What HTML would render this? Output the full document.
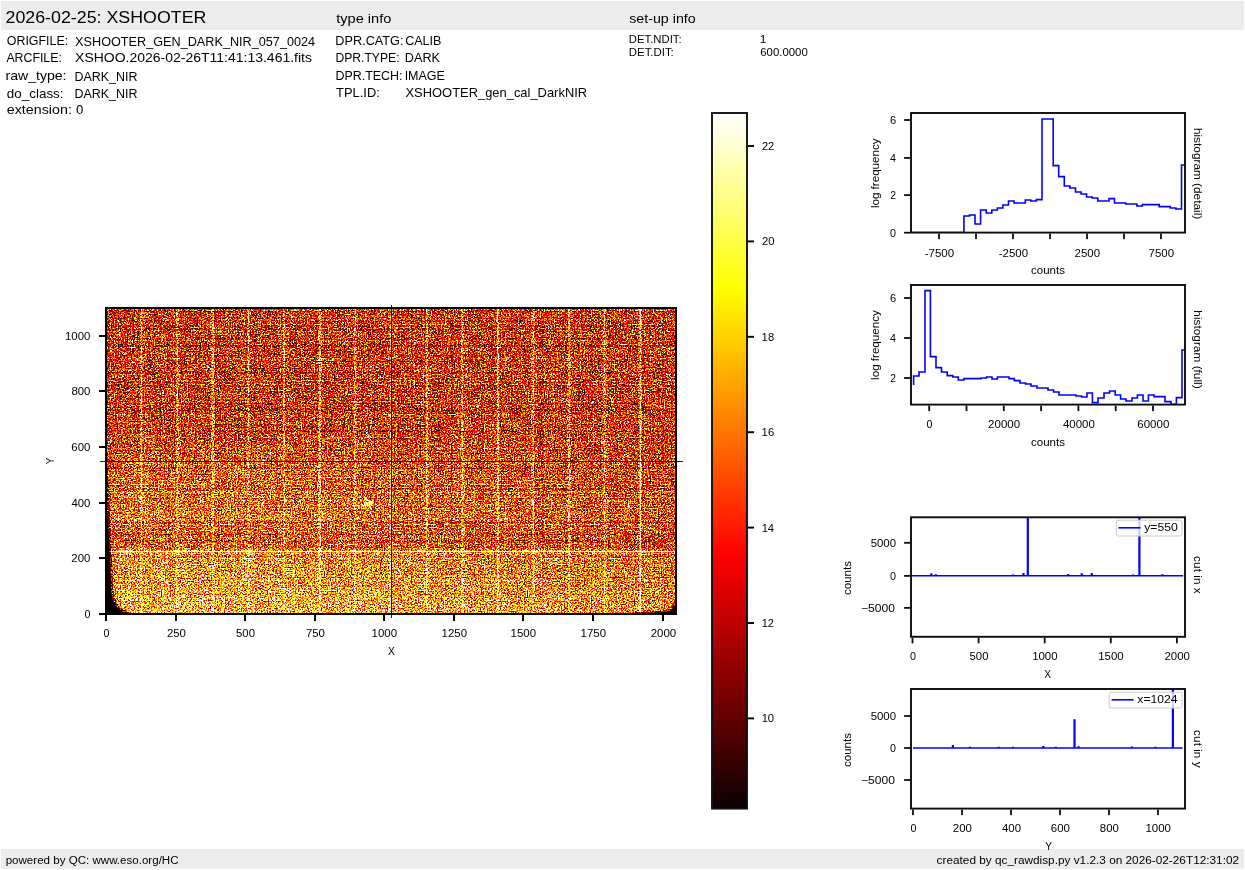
<!DOCTYPE html>
<html><head><meta charset="utf-8"><title>XSHOOTER DARK_NIR raw display</title>
<style>
html,body{margin:0;padding:0;background:#fff;}
body{width:1245px;height:870px;overflow:hidden;}
svg{display:block;will-change:transform;}
text{font-family:"Liberation Sans", sans-serif;}
</style></head>
<body>
<svg width="1245" height="870" viewBox="0 0 1245 870">
<defs>
<linearGradient id="hot" x1="0" y1="1" x2="0" y2="0">
<stop offset="0" stop-color="rgb(11,0,0)"/><stop offset="0.365079" stop-color="rgb(255,0,0)"/>
<stop offset="0.746032" stop-color="rgb(255,255,0)"/><stop offset="1" stop-color="rgb(255,255,255)"/>
</linearGradient>
<linearGradient id="xdark" gradientUnits="userSpaceOnUse" x1="106.0" y1="0" x2="676.0" y2="0">
<stop offset="0" stop-color="#000" stop-opacity="0"/><stop offset="0.3" stop-color="#000" stop-opacity="0"/><stop offset="1" stop-color="#000" stop-opacity="0.15"/>
</linearGradient>
<linearGradient id="bg" gradientUnits="userSpaceOnUse" x1="0" y1="308.0" x2="0" y2="614.0">
<stop offset="0" stop-color="#5d5d5d"/><stop offset="0.4" stop-color="#606060"/><stop offset="0.53" stop-color="#787878"/><stop offset="0.69" stop-color="#858585"/><stop offset="0.74" stop-color="#787878"/><stop offset="0.79" stop-color="#787878"/><stop offset="0.8" stop-color="#919191"/><stop offset="0.89" stop-color="#9d9d9d"/><stop offset="1" stop-color="#afafaf"/>
</linearGradient>
<filter id="nz" filterUnits="userSpaceOnUse" x="106.0" y="308.0" width="570.0" height="306.0" color-interpolation-filters="sRGB">
<feTurbulence type="fractalNoise" baseFrequency="0.7" numOctaves="2" seed="11" result="t"/>
<feColorMatrix in="t" type="matrix" values="1 0 0 0 0  1 0 0 0 0  1 0 0 0 0  0 0 0 0 1" result="n"/>
<feTurbulence type="fractalNoise" baseFrequency="0.09" numOctaves="2" seed="5" result="t2"/>
<feColorMatrix in="t2" type="matrix" values="1 0 0 0 0  1 0 0 0 0  1 0 0 0 0  0 0 0 0 1" result="n2"/>
<feTurbulence type="fractalNoise" baseFrequency="0 0.62" numOctaves="1" seed="23" result="t3"/>
<feColorMatrix in="t3" type="matrix" values="1 0 0 0 0  1 0 0 0 0  1 0 0 0 0  0 0 0 0 1" result="n3"/>
<feComposite in="SourceGraphic" in2="n2" operator="arithmetic" k1="0" k2="1" k3="0.22" k4="-0.11" result="s2"/>
<feComposite in="s2" in2="n3" operator="arithmetic" k1="0" k2="1" k3="0.5" k4="-0.25" result="s3a"/>
<feTurbulence type="fractalNoise" baseFrequency="0.45 0" numOctaves="2" seed="67" result="t5"/>
<feColorMatrix in="t5" type="matrix" values="1 0 0 0 0  1 0 0 0 0  1 0 0 0 0  0 0 0 0 1" result="n5"/>
<feComposite in="s3a" in2="n5" operator="arithmetic" k1="0" k2="1" k3="0.3" k4="-0.15" result="s3"/>
<feTurbulence type="fractalNoise" baseFrequency="0.77" numOctaves="1" seed="41" result="t4"/>
<feColorMatrix in="t4" type="matrix" values="0 22 0 0 -14.3  0 22 0 0 -14.3  0 22 0 0 -14.3  0 0 0 0 1" result="n4"/>
<feComposite in="s3" in2="n4" operator="arithmetic" k1="0" k2="1" k3="0.6" k4="0" result="s4"/>
<feComposite in="s4" in2="n" operator="arithmetic" k1="1.0" k2="0.5" k3="1.45" k4="-0.725" result="s"/>
<feComponentTransfer in="s">
<feFuncR type="table" tableValues="0.0416 0.0833 0.1249 0.1666 0.2083 0.2499 0.2916 0.3333 0.3750 0.4166 0.4583 0.5000 0.5416 0.5833 0.6250 0.6666 0.7083 0.7500 0.7917 0.8333 0.8750 0.9167 0.9583 1.0000 1.0000 1.0000 1.0000 1.0000 1.0000 1.0000 1.0000 1.0000 1.0000 1.0000 1.0000 1.0000 1.0000 1.0000 1.0000 1.0000 1.0000 1.0000 1.0000 1.0000 1.0000 1.0000 1.0000 1.0000 1.0000 1.0000 1.0000 1.0000 1.0000 1.0000 1.0000 1.0000 1.0000 1.0000 1.0000 1.0000 1.0000 1.0000 1.0000 1.0000"/>
<feFuncG type="table" tableValues="0.0000 0.0000 0.0000 0.0000 0.0000 0.0000 0.0000 0.0000 0.0000 0.0000 0.0000 0.0000 0.0000 0.0000 0.0000 0.0000 0.0000 0.0000 0.0000 0.0000 0.0000 0.0000 0.0000 0.0000 0.0417 0.0833 0.1250 0.1667 0.2083 0.2500 0.2917 0.3333 0.3750 0.4167 0.4583 0.5000 0.5417 0.5833 0.6250 0.6667 0.7083 0.7500 0.7917 0.8333 0.8750 0.9167 0.9583 1.0000 1.0000 1.0000 1.0000 1.0000 1.0000 1.0000 1.0000 1.0000 1.0000 1.0000 1.0000 1.0000 1.0000 1.0000 1.0000 1.0000"/>
<feFuncB type="table" tableValues="0.0000 0.0000 0.0000 0.0000 0.0000 0.0000 0.0000 0.0000 0.0000 0.0000 0.0000 0.0000 0.0000 0.0000 0.0000 0.0000 0.0000 0.0000 0.0000 0.0000 0.0000 0.0000 0.0000 0.0000 0.0000 0.0000 0.0000 0.0000 0.0000 0.0000 0.0000 0.0000 0.0000 0.0000 0.0000 0.0000 0.0000 0.0000 0.0000 0.0000 0.0000 0.0000 0.0000 0.0000 0.0000 0.0000 0.0000 0.0000 0.0625 0.1250 0.1875 0.2500 0.3125 0.3750 0.4375 0.5000 0.5625 0.6250 0.6875 0.7500 0.8125 0.8750 0.9375 1.0000"/>
<feFuncA type="linear" slope="0" intercept="1"/>
</feComponentTransfer>
</filter>
</defs>
<rect x="0" y="0" width="1245" height="870" fill="#fff"/>
<rect x="1" y="1" width="1243" height="29" fill="#ececec"/>
<rect x="1" y="849" width="1243" height="19.6" fill="#ececec"/>
<text x="5.50" y="23.00" font-size="16.97" textLength="200.89" lengthAdjust="spacingAndGlyphs" fill="#000">2026-02-25: XSHOOTER</text>
<text x="336.18" y="22.60" font-size="12.72" textLength="55.15" lengthAdjust="spacingAndGlyphs" fill="#000">type info</text>
<text x="629.20" y="22.60" font-size="12.72" textLength="66.52" lengthAdjust="spacingAndGlyphs" fill="#000">set-up info</text>
<text x="6.81" y="45.00" font-size="12.72" textLength="61.41" lengthAdjust="spacingAndGlyphs" fill="#000">ORIGFILE:</text>
<text x="75.12" y="46.00" font-size="12.72" textLength="240.01" lengthAdjust="spacingAndGlyphs" fill="#000">XSHOOTER_GEN_DARK_NIR_057_0024</text>
<text x="6.38" y="62.00" font-size="12.72" textLength="55.51" lengthAdjust="spacingAndGlyphs" fill="#000">ARCFILE:</text>
<text x="75.09" y="62.00" font-size="12.72" textLength="236.89" lengthAdjust="spacingAndGlyphs" fill="#000">XSHOO.2026-02-26T11:41:13.461.fits</text>
<text x="5.47" y="80.00" font-size="12.72" textLength="61.03" lengthAdjust="spacingAndGlyphs" fill="#000">raw_type:</text>
<text x="74.38" y="80.60" font-size="12.72" textLength="63.05" lengthAdjust="spacingAndGlyphs" fill="#000">DARK_NIR</text>
<text x="6.84" y="98.00" font-size="12.72" textLength="56.72" lengthAdjust="spacingAndGlyphs" fill="#000">do_class:</text>
<text x="74.38" y="98.00" font-size="12.72" textLength="63.05" lengthAdjust="spacingAndGlyphs" fill="#000">DARK_NIR</text>
<text x="6.79" y="114.00" font-size="12.72" textLength="65.13" lengthAdjust="spacingAndGlyphs" fill="#000">extension:</text>
<text x="76.09" y="114.00" font-size="12.72" textLength="7.33" lengthAdjust="spacingAndGlyphs" fill="#000">0</text>
<text x="335.37" y="45.00" font-size="12.72" textLength="68.12" lengthAdjust="spacingAndGlyphs" fill="#000">DPR.CATG:</text>
<text x="405.16" y="45.00" font-size="12.72" textLength="36.22" lengthAdjust="spacingAndGlyphs" fill="#000">CALIB</text>
<text x="335.40" y="62.00" font-size="12.72" textLength="64.16" lengthAdjust="spacingAndGlyphs" fill="#000">DPR.TYPE:</text>
<text x="404.76" y="62.00" font-size="12.72" textLength="35.28" lengthAdjust="spacingAndGlyphs" fill="#000">DARK</text>
<text x="335.38" y="80.00" font-size="12.72" textLength="67.17" lengthAdjust="spacingAndGlyphs" fill="#000">DPR.TECH:</text>
<text x="404.65" y="80.00" font-size="12.72" textLength="40.27" lengthAdjust="spacingAndGlyphs" fill="#000">IMAGE</text>
<text x="336.11" y="97.00" font-size="12.72" textLength="43.68" lengthAdjust="spacingAndGlyphs" fill="#000">TPL.ID:</text>
<text x="405.51" y="97.00" font-size="12.72" textLength="181.64" lengthAdjust="spacingAndGlyphs" fill="#000">XSHOOTER_gen_cal_DarkNIR</text>
<text x="628.81" y="42.70" font-size="10.64" textLength="52.83" lengthAdjust="spacingAndGlyphs" fill="#000">DET.NDIT:</text>
<text x="759.88" y="42.90" font-size="10.89" textLength="6.71" lengthAdjust="spacingAndGlyphs" fill="#000">1</text>
<text x="628.81" y="55.70" font-size="10.64" textLength="45.01" lengthAdjust="spacingAndGlyphs" fill="#000">DET.DIT:</text>
<text x="760.22" y="55.90" font-size="10.89" textLength="47.52" lengthAdjust="spacingAndGlyphs" fill="#000">600.0000</text>
<text x="5.66" y="864.00" font-size="10.61" textLength="172.91" lengthAdjust="spacingAndGlyphs" fill="#000">powered by QC: www.eso.org/HC</text>
<text x="936.59" y="864.00" font-size="10.61" textLength="302.51" lengthAdjust="spacingAndGlyphs" fill="#000">created by qc_rawdisp.py v1.2.3 on 2026-02-26T12:31:02</text>
<g filter="url(#nz)">
<rect x="106.0" y="308.0" width="570.0" height="306.0" fill="url(#bg)"/>
<rect x="106.0" y="445" width="570.0" height="169.0" fill="url(#xdark)"/>
<rect x="140.12" y="308.0" width="3" height="306.0" fill="#fff" fill-opacity="0.16"/>
<rect x="141.03" y="308.0" width="1.2" height="306.0" fill="#fff" fill-opacity="0.5"/>
<rect x="175.75" y="308.0" width="3" height="306.0" fill="#fff" fill-opacity="0.16"/>
<rect x="176.65" y="308.0" width="1.2" height="306.0" fill="#fff" fill-opacity="0.42"/>
<rect x="211.38" y="308.0" width="3" height="306.0" fill="#fff" fill-opacity="0.16"/>
<rect x="212.28" y="308.0" width="1.2" height="306.0" fill="#fff" fill-opacity="0.55"/>
<rect x="247.00" y="308.0" width="3" height="306.0" fill="#fff" fill-opacity="0.16"/>
<rect x="247.90" y="308.0" width="1.2" height="306.0" fill="#fff" fill-opacity="0.4"/>
<rect x="282.62" y="308.0" width="3" height="306.0" fill="#fff" fill-opacity="0.16"/>
<rect x="283.52" y="308.0" width="1.2" height="306.0" fill="#fff" fill-opacity="0.45"/>
<rect x="318.25" y="308.0" width="3" height="306.0" fill="#fff" fill-opacity="0.16"/>
<rect x="319.15" y="308.0" width="1.2" height="306.0" fill="#fff" fill-opacity="0.5"/>
<rect x="353.88" y="308.0" width="3" height="306.0" fill="#fff" fill-opacity="0.16"/>
<rect x="354.77" y="308.0" width="1.2" height="306.0" fill="#fff" fill-opacity="0.38"/>
<rect x="389.50" y="308.0" width="3" height="306.0" fill="#fff" fill-opacity="0.16"/>
<rect x="390.40" y="308.0" width="1.2" height="306.0" fill="#fff" fill-opacity="0.55"/>
<rect x="425.12" y="308.0" width="3" height="306.0" fill="#fff" fill-opacity="0.16"/>
<rect x="426.02" y="308.0" width="1.2" height="306.0" fill="#fff" fill-opacity="0.4"/>
<rect x="460.75" y="308.0" width="3" height="306.0" fill="#fff" fill-opacity="0.16"/>
<rect x="461.65" y="308.0" width="1.2" height="306.0" fill="#fff" fill-opacity="0.45"/>
<rect x="496.38" y="308.0" width="3" height="306.0" fill="#fff" fill-opacity="0.16"/>
<rect x="497.27" y="308.0" width="1.2" height="306.0" fill="#fff" fill-opacity="0.62"/>
<rect x="532.00" y="308.0" width="3" height="306.0" fill="#fff" fill-opacity="0.16"/>
<rect x="532.90" y="308.0" width="1.2" height="306.0" fill="#fff" fill-opacity="0.4"/>
<rect x="567.62" y="308.0" width="3" height="306.0" fill="#fff" fill-opacity="0.16"/>
<rect x="568.52" y="308.0" width="1.2" height="306.0" fill="#fff" fill-opacity="0.45"/>
<rect x="603.25" y="308.0" width="3" height="306.0" fill="#fff" fill-opacity="0.16"/>
<rect x="604.15" y="308.0" width="1.2" height="306.0" fill="#fff" fill-opacity="0.42"/>
<rect x="638.88" y="308.0" width="3" height="306.0" fill="#fff" fill-opacity="0.16"/>
<rect x="639.77" y="308.0" width="1.2" height="306.0" fill="#fff" fill-opacity="0.66"/>
<rect x="106.0" y="345.5" width="570.0" height="1" fill="#000" fill-opacity="0.55"/>
<rect x="106.0" y="409.5" width="570.0" height="1" fill="#000" fill-opacity="0.65"/>
<rect x="106.0" y="431.5" width="570.0" height="1" fill="#000" fill-opacity="0.45"/>
<rect x="106.0" y="540.5" width="570.0" height="1" fill="#000" fill-opacity="0.45"/>
<rect x="106.0" y="371.5" width="570.0" height="1" fill="#000" fill-opacity="0.25"/>
<rect x="106.0" y="467.5" width="570.0" height="1" fill="#000" fill-opacity="0.3"/>
<rect x="106.0" y="488.5" width="570.0" height="1" fill="#000" fill-opacity="0.25"/>
<rect x="106.0" y="521.5" width="570.0" height="1" fill="#000" fill-opacity="0.3"/>
<rect x="106.0" y="534.5" width="570.0" height="1" fill="#000" fill-opacity="0.3"/>
<rect x="106.0" y="325.5" width="570.0" height="1" fill="#000" fill-opacity="0.2"/>
<rect x="106.0" y="390.5" width="570.0" height="1" fill="#000" fill-opacity="0.2"/>
<rect x="106.0" y="550.8" width="570.0" height="1.3" fill="#fff" fill-opacity="1"/>
<ellipse cx="369" cy="503.4" rx="5" ry="3" fill="#fff" fill-opacity="0.95"/>
<ellipse cx="362" cy="506" rx="5" ry="2" fill="#fff" fill-opacity="0.4"/>
<path d="M106,614 L106,430 L108,470 L110,517 L111.5,553 L113,585 C114,598 116,604 121,608 C125,611 129,612.5 134,614 Z" fill="#000" fill-opacity="0.75"/>
<path d="M676,614 L676,594 C675,604 671,609 664,610.5 L640,612 L620,614 Z" fill="#000" fill-opacity="0.7"/>
</g>
<rect x="106" y="551" width="570" height="1" fill="#fff" fill-opacity="0.85"/>
<rect x="118" y="550.6" width="14" height="1.9" fill="#fff" fill-opacity="0.9"/>
<rect x="177" y="550.6" width="5" height="1.9" fill="#fff" fill-opacity="0.9"/>
<rect x="248" y="550.6" width="5" height="1.9" fill="#fff" fill-opacity="0.9"/>
<rect x="355" y="550.6" width="6" height="1.9" fill="#fff" fill-opacity="0.9"/>
<rect x="391" y="550.6" width="3" height="1.9" fill="#fff" fill-opacity="0.9"/>
<rect x="462" y="550.6" width="8" height="1.9" fill="#fff" fill-opacity="0.9"/>
<rect x="533" y="550.6" width="5" height="1.9" fill="#fff" fill-opacity="0.9"/>
<rect x="640" y="550.6" width="6" height="1.9" fill="#fff" fill-opacity="0.9"/>
<path d="M106,614 L106,500 L107.5,517 L108.4,528 L109.7,553 L110.5,577 L111.3,593 C112,598 112.5,600 113,601.5 C114.5,605 116.5,607 119.4,609 C122,611 124,612.5 127,614 Z" fill="#0b0000"/>
<path d="M676,614 L676,601 C675.4,606 672.5,610.3 667,611.6 L646,613 L638,614 Z" fill="#0b0000"/>
<rect x="391" y="305" width="1" height="313" fill="#0000ff"/>
<rect x="100" y="461" width="583" height="1" fill="#0000ff"/>
<rect x="106.0" y="308.0" width="570.0" height="306.0" fill="none" stroke="#000" stroke-width="2"/>
<rect x="105" y="615" width="2" height="6" fill="#000"/>
<text x="103.51" y="637.20" font-size="10.38" textLength="5.98" lengthAdjust="spacingAndGlyphs" fill="#000">0</text>
<rect x="175" y="615" width="2" height="6" fill="#000"/>
<text x="166.90" y="637.20" font-size="10.38" textLength="19.07" lengthAdjust="spacingAndGlyphs" fill="#000">250</text>
<rect x="244" y="615" width="2" height="6" fill="#000"/>
<text x="236.04" y="637.20" font-size="10.38" textLength="18.90" lengthAdjust="spacingAndGlyphs" fill="#000">500</text>
<rect x="314" y="615" width="2" height="6" fill="#000"/>
<text x="305.94" y="637.20" font-size="10.38" textLength="18.98" lengthAdjust="spacingAndGlyphs" fill="#000">750</text>
<rect x="383" y="615" width="2" height="6" fill="#000"/>
<text x="371.55" y="637.20" font-size="10.38" textLength="25.48" lengthAdjust="spacingAndGlyphs" fill="#000">1000</text>
<rect x="453" y="615" width="2" height="6" fill="#000"/>
<text x="441.55" y="637.20" font-size="10.38" textLength="25.48" lengthAdjust="spacingAndGlyphs" fill="#000">1250</text>
<rect x="522" y="615" width="2" height="6" fill="#000"/>
<text x="510.55" y="637.20" font-size="10.38" textLength="25.48" lengthAdjust="spacingAndGlyphs" fill="#000">1500</text>
<rect x="592" y="615" width="2" height="6" fill="#000"/>
<text x="580.55" y="637.20" font-size="10.38" textLength="25.48" lengthAdjust="spacingAndGlyphs" fill="#000">1750</text>
<rect x="662" y="615" width="2" height="6" fill="#000"/>
<text x="650.66" y="637.20" font-size="10.38" textLength="25.56" lengthAdjust="spacingAndGlyphs" fill="#000">2000</text>
<rect x="99" y="613" width="6" height="2" fill="#000"/>
<text x="84.44" y="617.90" font-size="10.38" textLength="5.98" lengthAdjust="spacingAndGlyphs" fill="#000">0</text>
<rect x="99" y="557" width="6" height="2" fill="#000"/>
<text x="71.38" y="561.90" font-size="10.38" textLength="19.07" lengthAdjust="spacingAndGlyphs" fill="#000">200</text>
<rect x="99" y="502" width="6" height="2" fill="#000"/>
<text x="71.45" y="506.90" font-size="10.38" textLength="19.00" lengthAdjust="spacingAndGlyphs" fill="#000">400</text>
<rect x="99" y="446" width="6" height="2" fill="#000"/>
<text x="71.34" y="450.90" font-size="10.38" textLength="19.11" lengthAdjust="spacingAndGlyphs" fill="#000">600</text>
<rect x="99" y="390" width="6" height="2" fill="#000"/>
<text x="71.41" y="394.90" font-size="10.38" textLength="19.04" lengthAdjust="spacingAndGlyphs" fill="#000">800</text>
<rect x="99" y="335" width="6" height="2" fill="#000"/>
<text x="64.97" y="339.90" font-size="10.38" textLength="25.48" lengthAdjust="spacingAndGlyphs" fill="#000">1000</text>
<text x="388.08" y="654.80" font-size="10.38" textLength="6.81" lengthAdjust="spacingAndGlyphs" fill="#000">X</text>
<text x="0" y="0" font-size="10.38" textLength="6.71" lengthAdjust="spacingAndGlyphs" fill="#000" transform="translate(53.80 461.00) rotate(-90) translate(-3.36 0)">Y</text>
<rect x="712.0" y="113.0" width="35.0" height="695.6" fill="url(#hot)" stroke="#111" stroke-width="1.9"/>
<rect x="748" y="717.45" width="6" height="1.9" fill="#000"/>
<text x="761.65" y="722.30" font-size="10.38" textLength="12.47" lengthAdjust="spacingAndGlyphs" fill="#000">10</text>
<rect x="748" y="622.05" width="6" height="1.9" fill="#000"/>
<text x="761.66" y="626.90" font-size="10.38" textLength="12.23" lengthAdjust="spacingAndGlyphs" fill="#000">12</text>
<rect x="748" y="526.65" width="6" height="1.9" fill="#000"/>
<text x="761.65" y="531.50" font-size="10.38" textLength="12.47" lengthAdjust="spacingAndGlyphs" fill="#000">14</text>
<rect x="748" y="431.25" width="6" height="1.9" fill="#000"/>
<text x="761.64" y="436.10" font-size="10.38" textLength="12.57" lengthAdjust="spacingAndGlyphs" fill="#000">16</text>
<rect x="748" y="335.85" width="6" height="1.9" fill="#000"/>
<text x="761.64" y="340.70" font-size="10.38" textLength="12.51" lengthAdjust="spacingAndGlyphs" fill="#000">18</text>
<rect x="748" y="240.45" width="6" height="1.9" fill="#000"/>
<text x="761.93" y="245.30" font-size="10.38" textLength="12.56" lengthAdjust="spacingAndGlyphs" fill="#000">20</text>
<rect x="748" y="145.05" width="6" height="1.9" fill="#000"/>
<text x="761.94" y="149.90" font-size="10.38" textLength="12.33" lengthAdjust="spacingAndGlyphs" fill="#000">22</text>
<clipPath id="c1"><rect x="911.0" y="113.0" width="274.0" height="119.6"/></clipPath>
<path d="M911.0,232.6 H963.9 V216.0 H969.5 V215.0 H975.0 V224.0 H980.6 V210.0 H986.2 V213.0 H991.8 V210.0 H997.4 V208.0 H1002.9 V205.0 H1008.5 V201.0 H1014.1 V203.0 H1019.7 V203.0 H1025.3 V200.0 H1030.8 V201.0 H1036.4 V199.6 H1042.0 V119.0 H1047.6 V119.0 H1053.2 V165.6 H1058.7 V176.6 H1064.3 V186.0 H1069.9 V188.0 H1075.5 V192.0 H1081.1 V194.0 H1086.6 V197.0 H1092.2 V198.0 H1097.8 V201.0 H1103.4 V201.0 H1109.0 V198.6 H1114.5 V203.0 H1120.1 V203.0 H1125.7 V204.0 H1131.3 V204.0 H1136.9 V206.0 H1142.4 V204.6 H1148.0 V204.6 H1153.6 V204.6 H1159.2 V206.6 H1164.8 V206.6 H1170.3 V208.0 H1175.9 V209.0 H1181.5 V165.0 H1187.1" fill="none" stroke="#0000ff" stroke-width="1.6" stroke-linejoin="miter" clip-path="url(#c1)"/>
<rect x="911.0" y="113.0" width="274.0" height="119.6" fill="none" stroke="#0d0d0d" stroke-width="1.9"/>
<rect x="938.10" y="233.50" width="1.8" height="5.6" fill="#0d0d0d"/>
<text x="924.66" y="256.60" font-size="10.38" textLength="29.42" lengthAdjust="spacingAndGlyphs" fill="#000">-7500</text>
<rect x="975.10" y="233.50" width="1.8" height="5.6" fill="#0d0d0d"/>
<rect x="1012.10" y="233.50" width="1.8" height="5.6" fill="#0d0d0d"/>
<text x="998.66" y="256.60" font-size="10.38" textLength="29.42" lengthAdjust="spacingAndGlyphs" fill="#000">-2500</text>
<rect x="1049.10" y="233.50" width="1.8" height="5.6" fill="#0d0d0d"/>
<rect x="1086.10" y="233.50" width="1.8" height="5.6" fill="#0d0d0d"/>
<text x="1074.56" y="256.60" font-size="10.38" textLength="25.56" lengthAdjust="spacingAndGlyphs" fill="#000">2500</text>
<rect x="1123.10" y="233.50" width="1.8" height="5.6" fill="#0d0d0d"/>
<rect x="1160.10" y="233.50" width="1.8" height="5.6" fill="#0d0d0d"/>
<text x="1148.59" y="256.60" font-size="10.38" textLength="25.48" lengthAdjust="spacingAndGlyphs" fill="#000">7500</text>
<rect x="904.10" y="231.80" width="6.0" height="1.8" fill="#0d0d0d"/>
<text x="890.04" y="236.50" font-size="10.38" textLength="5.98" lengthAdjust="spacingAndGlyphs" fill="#000">0</text>
<rect x="904.10" y="194.20" width="6.0" height="1.8" fill="#0d0d0d"/>
<text x="890.36" y="198.90" font-size="10.38" textLength="5.76" lengthAdjust="spacingAndGlyphs" fill="#000">2</text>
<rect x="904.10" y="157.00" width="6.0" height="1.8" fill="#0d0d0d"/>
<text x="889.93" y="161.70" font-size="10.38" textLength="5.98" lengthAdjust="spacingAndGlyphs" fill="#000">4</text>
<rect x="904.10" y="119.10" width="6.0" height="1.8" fill="#0d0d0d"/>
<text x="889.90" y="123.80" font-size="10.38" textLength="6.19" lengthAdjust="spacingAndGlyphs" fill="#000">6</text>
<text x="1031.03" y="274.20" font-size="10.38" textLength="33.94" lengthAdjust="spacingAndGlyphs" fill="#000">counts</text>
<text x="0" y="0" font-size="10.38" textLength="69.71" lengthAdjust="spacingAndGlyphs" fill="#000" transform="translate(879.00 173.20) rotate(-90) translate(-34.91 0)">log frequency</text>
<text x="0" y="0" font-size="10.38" textLength="91.33" lengthAdjust="spacingAndGlyphs" fill="#000" transform="translate(1193.60 173.60) rotate(90) translate(-45.68 0)">histogram (detail)</text>
<clipPath id="c2"><rect x="911.0" y="285.0" width="274.0" height="119.60000000000002"/></clipPath>
<path d="M913.6,385 V376 H919 V372 H925 V290.6 H930.4 V356.6 H936 V367.6 H941.5 V372 H947.2 V375.6 H952.8 V377 H958.3 V380 H964 V378.6 H981 V378 H986.4 V377 H992 V379 H997.4 V377 H1009 V378.6 H1014.4 V380.6 H1020 V383 H1025.6 V384 H1031 V386 H1037 V388 H1048 V390 H1053.6 V392 H1059 V395 H1076 V396 H1081.6 V397 H1087 V393 H1092.4 V402.6 H1098 V398 H1104 V393 H1109.6 V391 H1115.2 V395 H1120.6 V399 H1126 V401 H1132 V398 H1137.4 V395 H1143 V401 H1148.4 V395 H1154 V396.6 H1165 V401.6 H1171 V404.4 H1176.4 V397.6 H1182 V350 H1188" fill="none" stroke="#0000ff" stroke-width="1.6" clip-path="url(#c2)"/>
<rect x="911.0" y="285.0" width="274.0" height="119.6" fill="none" stroke="#0d0d0d" stroke-width="1.9"/>
<rect x="928.30" y="405.50" width="1.8" height="5.6" fill="#0d0d0d"/>
<text x="926.61" y="428.40" font-size="10.38" textLength="5.98" lengthAdjust="spacingAndGlyphs" fill="#000">0</text>
<rect x="965.60" y="405.50" width="1.8" height="5.6" fill="#0d0d0d"/>
<rect x="1002.90" y="405.50" width="1.8" height="5.6" fill="#0d0d0d"/>
<text x="988.11" y="428.40" font-size="10.38" textLength="32.05" lengthAdjust="spacingAndGlyphs" fill="#000">20000</text>
<rect x="1040.20" y="405.50" width="1.8" height="5.6" fill="#0d0d0d"/>
<rect x="1077.50" y="405.50" width="1.8" height="5.6" fill="#0d0d0d"/>
<text x="1062.90" y="428.40" font-size="10.38" textLength="31.99" lengthAdjust="spacingAndGlyphs" fill="#000">40000</text>
<rect x="1114.80" y="405.50" width="1.8" height="5.6" fill="#0d0d0d"/>
<rect x="1152.10" y="405.50" width="1.8" height="5.6" fill="#0d0d0d"/>
<text x="1137.28" y="428.40" font-size="10.38" textLength="32.10" lengthAdjust="spacingAndGlyphs" fill="#000">60000</text>
<rect x="904.10" y="377.10" width="6.0" height="1.8" fill="#0d0d0d"/>
<text x="890.36" y="381.80" font-size="10.38" textLength="5.76" lengthAdjust="spacingAndGlyphs" fill="#000">2</text>
<rect x="904.10" y="337.10" width="6.0" height="1.8" fill="#0d0d0d"/>
<text x="889.93" y="341.80" font-size="10.38" textLength="5.98" lengthAdjust="spacingAndGlyphs" fill="#000">4</text>
<rect x="904.10" y="297.10" width="6.0" height="1.8" fill="#0d0d0d"/>
<text x="889.90" y="301.80" font-size="10.38" textLength="6.19" lengthAdjust="spacingAndGlyphs" fill="#000">6</text>
<text x="1031.03" y="446.00" font-size="10.38" textLength="33.94" lengthAdjust="spacingAndGlyphs" fill="#000">counts</text>
<text x="0" y="0" font-size="10.38" textLength="69.71" lengthAdjust="spacingAndGlyphs" fill="#000" transform="translate(879.00 345.00) rotate(-90) translate(-34.91 0)">log frequency</text>
<text x="0" y="0" font-size="10.38" textLength="78.39" lengthAdjust="spacingAndGlyphs" fill="#000" transform="translate(1193.60 349.50) rotate(90) translate(-39.21 0)">histogram (full)</text>
<clipPath id="c3"><rect x="911.0" y="517.3" width="274.0" height="119.5"/></clipPath>
<path d="M911.0,575.8 H931.1 V574.0 H931.7 V575.8 H935.5 V575.0 H936.1 V575.8 H1012.7 V575.2 H1013.3 V575.8 H1023.2 V573.8 H1023.8 V575.8 H1027.5 V495.8 H1028.1 V575.8 H1067.9 V574.8 H1068.5 V575.8 H1081.4 V574.0 H1082.0 V575.8 H1091.5 V573.8 H1092.1 V575.8 H1133.0 V575.2 H1133.6 V575.8 H1139.1 V495.8 H1139.7 V575.8 H1162.1 V575.1 H1162.7 V575.8 H1183.2" fill="none" stroke="#0000ff" stroke-width="1.6" clip-path="url(#c3)"/>
<rect x="911.0" y="517.3" width="274.0" height="119.5" fill="none" stroke="#0d0d0d" stroke-width="1.9"/>
<rect x="911.60" y="637.70" width="1.8" height="5.6" fill="#0d0d0d"/>
<text x="909.91" y="660.40" font-size="10.38" textLength="5.98" lengthAdjust="spacingAndGlyphs" fill="#000">0</text>
<rect x="977.70" y="637.70" width="1.8" height="5.6" fill="#0d0d0d"/>
<text x="969.54" y="660.40" font-size="10.38" textLength="18.90" lengthAdjust="spacingAndGlyphs" fill="#000">500</text>
<rect x="1043.80" y="637.70" width="1.8" height="5.6" fill="#0d0d0d"/>
<text x="1032.15" y="660.40" font-size="10.38" textLength="25.48" lengthAdjust="spacingAndGlyphs" fill="#000">1000</text>
<rect x="1109.90" y="637.70" width="1.8" height="5.6" fill="#0d0d0d"/>
<text x="1098.25" y="660.40" font-size="10.38" textLength="25.48" lengthAdjust="spacingAndGlyphs" fill="#000">1500</text>
<rect x="1176.00" y="637.70" width="1.8" height="5.6" fill="#0d0d0d"/>
<text x="1164.46" y="660.40" font-size="10.38" textLength="25.56" lengthAdjust="spacingAndGlyphs" fill="#000">2000</text>
<rect x="904.10" y="541.90" width="6.0" height="1.8" fill="#0d0d0d"/>
<text x="870.65" y="546.60" font-size="10.38" textLength="25.40" lengthAdjust="spacingAndGlyphs" fill="#000">5000</text>
<rect x="904.10" y="575.00" width="6.0" height="1.8" fill="#0d0d0d"/>
<text x="890.04" y="579.70" font-size="10.38" textLength="5.98" lengthAdjust="spacingAndGlyphs" fill="#000">0</text>
<rect x="904.10" y="607.00" width="6.0" height="1.8" fill="#0d0d0d"/>
<text x="861.06" y="611.70" font-size="10.38" textLength="33.81" lengthAdjust="spacingAndGlyphs" fill="#000">−5000</text>
<text x="1044.18" y="678.00" font-size="10.38" textLength="6.81" lengthAdjust="spacingAndGlyphs" fill="#000">X</text>
<text x="0" y="0" font-size="10.38" textLength="33.94" lengthAdjust="spacingAndGlyphs" fill="#000" transform="translate(851.40 578.00) rotate(-90) translate(-16.97 0)">counts</text>
<text x="0" y="0" font-size="10.38" textLength="37.63" lengthAdjust="spacingAndGlyphs" fill="#000" transform="translate(1193.60 575.00) rotate(90) translate(-18.89 0)">cut in x</text>
<rect x="1116.2" y="520.2" width="65.8" height="15.8" rx="2" ry="2" fill="#fff" fill-opacity="0.8" stroke="#ccc" stroke-width="1"/>
<rect x="1118.4" y="527.0" width="22" height="1.6" fill="#0000ff"/>
<text x="1144.27" y="531.40" font-size="10.38" textLength="33.58" lengthAdjust="spacingAndGlyphs" fill="#000">y=550</text>
<clipPath id="c4"><rect x="911.0" y="689.0" width="274.0" height="119.60000000000002"/></clipPath>
<path d="M913.0,748.0 H952.6 V745.8 H953.2 V748.0 H969.5 V747.5 H970.1 V748.0 H998.5 V747.5 H999.0 V748.0 H1012.7 V747.5 H1013.3 V748.0 H1043.0 V746.8 H1043.6 V748.0 H1055.5 V747.5 H1056.1 V748.0 H1074.2 V720.0 H1074.8 V748.0 H1078.3 V747.1 H1078.9 V748.0 H1131.5 V747.3 H1132.1 V748.0 H1155.2 V747.5 H1155.8 V748.0 H1172.6 V668.0 H1173.2 V748.0 H1182.5" fill="none" stroke="#0000ff" stroke-width="1.6" clip-path="url(#c4)"/>
<rect x="911.0" y="689.0" width="274.0" height="119.6" fill="none" stroke="#0d0d0d" stroke-width="1.9"/>
<rect x="912.10" y="809.50" width="1.8" height="5.6" fill="#0d0d0d"/>
<text x="910.41" y="832.20" font-size="10.38" textLength="5.98" lengthAdjust="spacingAndGlyphs" fill="#000">0</text>
<rect x="961.10" y="809.50" width="1.8" height="5.6" fill="#0d0d0d"/>
<text x="952.80" y="832.20" font-size="10.38" textLength="19.07" lengthAdjust="spacingAndGlyphs" fill="#000">200</text>
<rect x="1010.10" y="809.50" width="1.8" height="5.6" fill="#0d0d0d"/>
<text x="1001.99" y="832.20" font-size="10.38" textLength="19.00" lengthAdjust="spacingAndGlyphs" fill="#000">400</text>
<rect x="1059.10" y="809.50" width="1.8" height="5.6" fill="#0d0d0d"/>
<text x="1050.78" y="832.20" font-size="10.38" textLength="19.11" lengthAdjust="spacingAndGlyphs" fill="#000">600</text>
<rect x="1108.10" y="809.50" width="1.8" height="5.6" fill="#0d0d0d"/>
<text x="1099.85" y="832.20" font-size="10.38" textLength="19.04" lengthAdjust="spacingAndGlyphs" fill="#000">800</text>
<rect x="1157.10" y="809.50" width="1.8" height="5.6" fill="#0d0d0d"/>
<text x="1145.45" y="832.20" font-size="10.38" textLength="25.48" lengthAdjust="spacingAndGlyphs" fill="#000">1000</text>
<rect x="904.10" y="715.10" width="6.0" height="1.8" fill="#0d0d0d"/>
<text x="870.65" y="719.80" font-size="10.38" textLength="25.40" lengthAdjust="spacingAndGlyphs" fill="#000">5000</text>
<rect x="904.10" y="747.10" width="6.0" height="1.8" fill="#0d0d0d"/>
<text x="890.04" y="751.80" font-size="10.38" textLength="5.98" lengthAdjust="spacingAndGlyphs" fill="#000">0</text>
<rect x="904.10" y="779.10" width="6.0" height="1.8" fill="#0d0d0d"/>
<text x="861.06" y="783.80" font-size="10.38" textLength="33.81" lengthAdjust="spacingAndGlyphs" fill="#000">−5000</text>
<text x="1045.24" y="849.60" font-size="10.38" textLength="6.71" lengthAdjust="spacingAndGlyphs" fill="#000">Y</text>
<text x="0" y="0" font-size="10.38" textLength="33.94" lengthAdjust="spacingAndGlyphs" fill="#000" transform="translate(851.40 750.00) rotate(-90) translate(-16.97 0)">counts</text>
<text x="0" y="0" font-size="10.38" textLength="37.55" lengthAdjust="spacingAndGlyphs" fill="#000" transform="translate(1193.60 749.00) rotate(90) translate(-18.89 0)">cut in y</text>
<rect x="1109.2" y="692.2" width="72.8" height="15.8" rx="2" ry="2" fill="#fff" fill-opacity="0.8" stroke="#ccc" stroke-width="1"/>
<rect x="1111.6" y="699.0" width="22" height="1.6" fill="#0000ff"/>
<text x="1137.36" y="703.40" font-size="10.38" textLength="40.17" lengthAdjust="spacingAndGlyphs" fill="#000">x=1024</text>
</svg>
</body></html>
